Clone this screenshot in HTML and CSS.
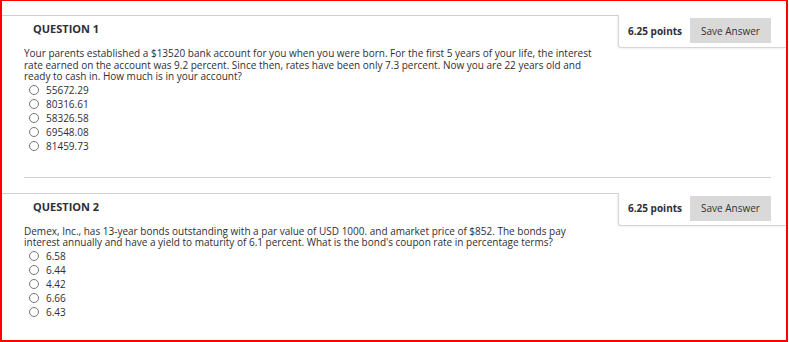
FILE: index.html
```html
<!DOCTYPE html>
<html lang="en">

<head>
  <meta charset="UTF-8">
  <meta name="viewport" content="width=device-width, initial-scale=1.0">
  <title>Take Test</title>
  <link rel="stylesheet" href="styles.css">
</head>

<body>
  <div class="frame">
    <div class="question">
      <div class="q-top">
        <div class="q-title">
          <h3>QUESTION 1</h3>
        </div>
        <div class="q-points">
          <span class="points">6.25 points</span>
          <button>Save Answer</button>
        </div>
      </div>
      <div class="q-body">
        <p class="text">Your parents established a $13520 bank account for you when you were born. For the first 5 years of your life, the interest rate earned on the account was 9.2 percent. Since then, rates have been only 7.3 percent. Now you are 22 years old and ready to cash in. How much is in your account?</p>
        <ul class="options">
          <li><input type="radio" name="q1"><label>55672.29</label></li>
          <li><input type="radio" name="q1"><label>80316.61</label></li>
          <li><input type="radio" name="q1"><label>58326.58</label></li>
          <li><input type="radio" name="q1"><label>69548.08</label></li>
          <li><input type="radio" name="q1"><label>81459.73</label></li>
        </ul>
      </div>
      <hr class="divider">
    </div>

    <div class="question">
      <div class="q-top">
        <div class="q-title">
          <h3>QUESTION 2</h3>
        </div>
        <div class="q-points">
          <span class="points">6.25 points</span>
          <button>Save Answer</button>
        </div>
      </div>
      <div class="q-body">
        <p class="text">Demex, Inc., has 13-year bonds outstanding with a par value of USD 1000. and amarket price of $852. The bonds pay interest annually and have a yield to maturity of 6.1 percent. What is the bond's coupon rate in percentage terms?</p>
        <ul class="options">
          <li><input type="radio" name="q2"><label>6.58</label></li>
          <li><input type="radio" name="q2"><label>6.44</label></li>
          <li><input type="radio" name="q2"><label>4.42</label></li>
          <li><input type="radio" name="q2"><label>6.66</label></li>
          <li><input type="radio" name="q2"><label>6.43</label></li>
        </ul>
      </div>
    </div>
  </div>
</body>

</html>
```

FILE: styles.css
```css
* {
  box-sizing: border-box;
}

body {
  margin: 0;
  background: #fff;
  font-family: "Open Sans", "Liberation Sans", sans-serif;
  color: #2e2e33;
}

.frame {
  width: 788px;
  height: 342px;
  border: 2px solid #f00;
  border-top-width: 1px;
  padding-top: 14px;
}

.q-top {
  display: flex;
  align-items: flex-start;
}

.q-title {
  flex: 1;
  border-top: 1px solid #cfcfcf;
  padding-left: 31px;
}

.q-title h3 {
  margin: 0;
  padding-top: 5px;
  font-size: 11px;
  line-height: 16px;
  font-weight: 700;
}

.q-points {
  width: 168px;
  display: flex;
  align-items: center;
  padding: 3px 15px 4px 9px;
  border-left: 1px solid #d6d6d6;
  border-bottom: 1px solid #d6d6d6;
  border-bottom-left-radius: 3px;
  box-shadow: -1px 1px 2px rgba(0, 0, 0, 0.06);
}

.q-points .points {
  flex: 1;
  font-size: 10px;
  font-weight: 700;
}

.q-points button {
  width: 81px;
  height: 25px;
  border: none;
  background: #d9d9d9;
  font-family: inherit;
  font-size: 10px;
  color: #333;
  padding: 0;
}

.q-body {
  padding-left: 22px;
}

.q-body .text {
  margin: 0;
  width: 575px;
  font-size: 10px;
  line-height: 11.5px;
}

.options {
  list-style: none;
  margin: 0;
  padding: 0 0 0 5px;
}

.options li {
  display: flex;
  align-items: center;
  height: 14px;
  font-size: 10px;
}

.options input {
  appearance: none;
  width: 10px;
  height: 10px;
  margin: 0 7px 0 0;
  border: 1px solid #777;
  border-radius: 50%;
}

.divider {
  margin: 24px 15px 15px 22px;
  border: none;
  border-top: 1px solid #cfcfcf;
}
```
